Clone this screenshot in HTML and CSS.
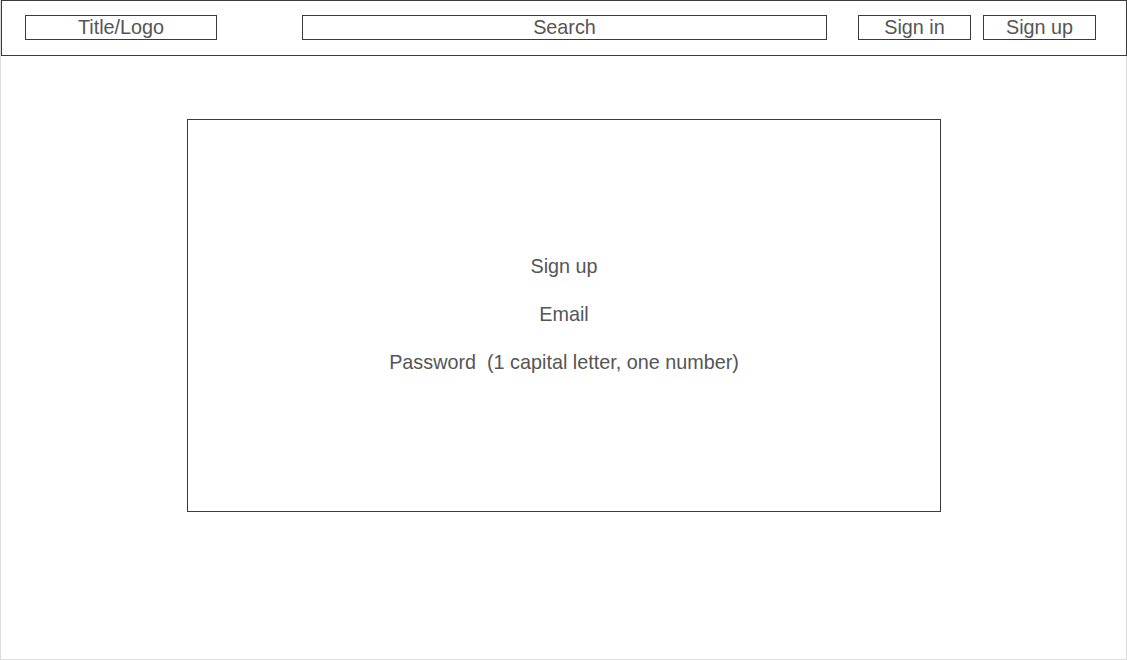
FILE: index.html
```html
<!DOCTYPE html>
<html>
<head>
<meta charset="utf-8">
<link rel="stylesheet" href="styles.css">
</head>
<body>
<div class="frame">
  <header class="topbar">
    <div class="box logo">Title/Logo</div>
    <div class="box search">Search</div>
    <div class="actions">
      <div class="box btn">Sign in</div>
      <div class="box btn">Sign up</div>
    </div>
  </header>
  <main class="content">
    <section class="card">
      <div class="line">Sign up</div>
      <div class="line">Email</div>
      <div class="line">Password&nbsp; (1 capital letter, one number)</div>
    </section>
  </main>
</div>
</body>
</html>
```
FILE: styles.css
```css
* { box-sizing: border-box; }
html, body { margin: 0; padding: 0; background: #fff; }
body {
  font-family: "Liberation Sans", Arial, sans-serif;
  color: #555555;
  font-size: 19.8px;
}
.frame {
  width: 1127px;
  height: 660px;
  border: 1px solid #dcdcdc;
  border-top: none;
  display: flex;
  flex-direction: column;
}
.topbar {
  height: 56px;
  margin-right: -1px;
  border: 1px solid #3a3a3a;
  display: flex;
  align-items: flex-start;
  padding: 14px 0 0 23px;
}
.box {
  border: 1px solid #3a3a3a;
  height: 25px;
  display: flex;
  align-items: center;
  justify-content: center;
  line-height: 1;
}
.logo { width: 192px; }
.search { width: 525px; margin-left: 85px; }
.actions { display: flex; gap: 12px; margin-left: 31px; }
.btn { width: 113px; }
.content {
  flex: 1;
  padding: 63px 0 0 186px;
}
.card {
  width: 754px;
  height: 393px;
  border: 1px solid #3a3a3a;
  display: flex;
  flex-direction: column;
  align-items: center;
  justify-content: center;
  gap: 26px;
  line-height: 22px;
  padding-bottom: 4px;
}
```
